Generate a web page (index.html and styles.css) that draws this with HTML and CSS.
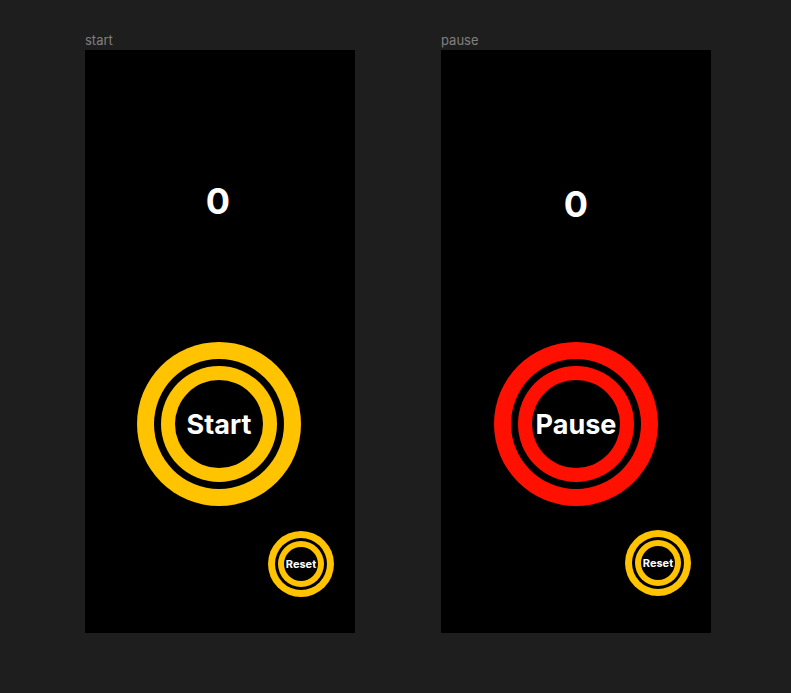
FILE: index.html
```html
<!DOCTYPE html>
<html lang="en">
<head>
<meta charset="utf-8">
<title>Timer frames</title>
<link rel="stylesheet" href="styles.css">
</head>
<body>
<main class="canvas">
  <section class="board">
    <div class="board-label">start</div>
    <div class="frame">
      <div class="count">0</div>
      <div class="btn btn--big btn--yellow">
        <div class="btn-gap"><div class="btn-ring"><div class="btn-face">Start</div></div></div>
      </div>
      <div class="btn btn--small btn--yellow reset">
        <div class="btn-gap"><div class="btn-ring"><div class="btn-face">Reset</div></div></div>
      </div>
    </div>
  </section>
  <section class="board">
    <div class="board-label">pause</div>
    <div class="frame">
      <div class="count count--low">0</div>
      <div class="btn btn--big btn--red btn--pause">
        <div class="btn-gap"><div class="btn-ring"><div class="btn-face">Pause</div></div></div>
      </div>
      <div class="btn btn--small btn--yellow reset reset--right">
        <div class="btn-gap"><div class="btn-ring"><div class="btn-face">Reset</div></div></div>
      </div>
    </div>
  </section>
</main>
</body>
</html>
```

FILE: styles.css
```css
* { box-sizing: border-box; }
html, body { margin: 0; padding: 0; }
body {
  background: #1e1e1e;
  font-family: Inter, "Noto Sans", sans-serif;
  width: 791px;
  height: 693px;
  overflow: hidden;
}
.canvas {
  display: flex;
  gap: 86px;
  padding: 32px 0 0 85px;
}
.board { display: flex; flex-direction: column; }
.board-label {
  font-size: 13px;
  line-height: 16px;
  height: 16px;
  color: #808080;
  margin-bottom: 2px;
}
.frame {
  width: 270px;
  height: 583px;
  background: #000;
  display: flex;
  flex-direction: column;
  align-items: center;
}
.count {
  margin-top: 133px;
  font-size: 36px;
  line-height: 36px;
  font-weight: 700;
  color: #fff;
  margin-left: -4px;
}
.count--low { margin-top: 136px; margin-left: 0; }
.btn {
  border-radius: 50%;
  display: flex;
  flex-shrink: 0;
}
.btn-gap, .btn-ring, .btn-face {
  flex: 1;
  display: flex;
  border-radius: 50%;
}
.btn-gap { background: #000; }
.btn-face {
  background: #000;
  align-items: center;
  justify-content: center;
  color: #fff;
  font-weight: 700;
}
.btn--yellow, .btn--yellow .btn-ring { background: #ffc300; }
.btn--red, .btn--red .btn-ring { background: #ff1000; }
.btn--big {
  width: 164px;
  height: 164px;
  padding: 17px;
  margin-top: 123px;
  margin-left: -2px;
}
.btn--pause { margin-left: 0; margin-top: 120px; }
.btn--big .btn-gap { padding: 7px; }
.btn--big .btn-ring { padding: 14px; }
.btn--big .btn-face { font-size: 27px; }
.btn--small {
  width: 66px;
  height: 66px;
  padding: 7px;
}
.btn--small .btn-gap { padding: 3px; }
.btn--small .btn-ring { padding: 6px; }
.btn--small .btn-face { font-size: 11px; }
.reset {
  align-self: flex-end;
  margin-top: 25px;
  margin-right: 21px;
}
.reset--right { margin-right: 20px; margin-top: 24px; }
```
